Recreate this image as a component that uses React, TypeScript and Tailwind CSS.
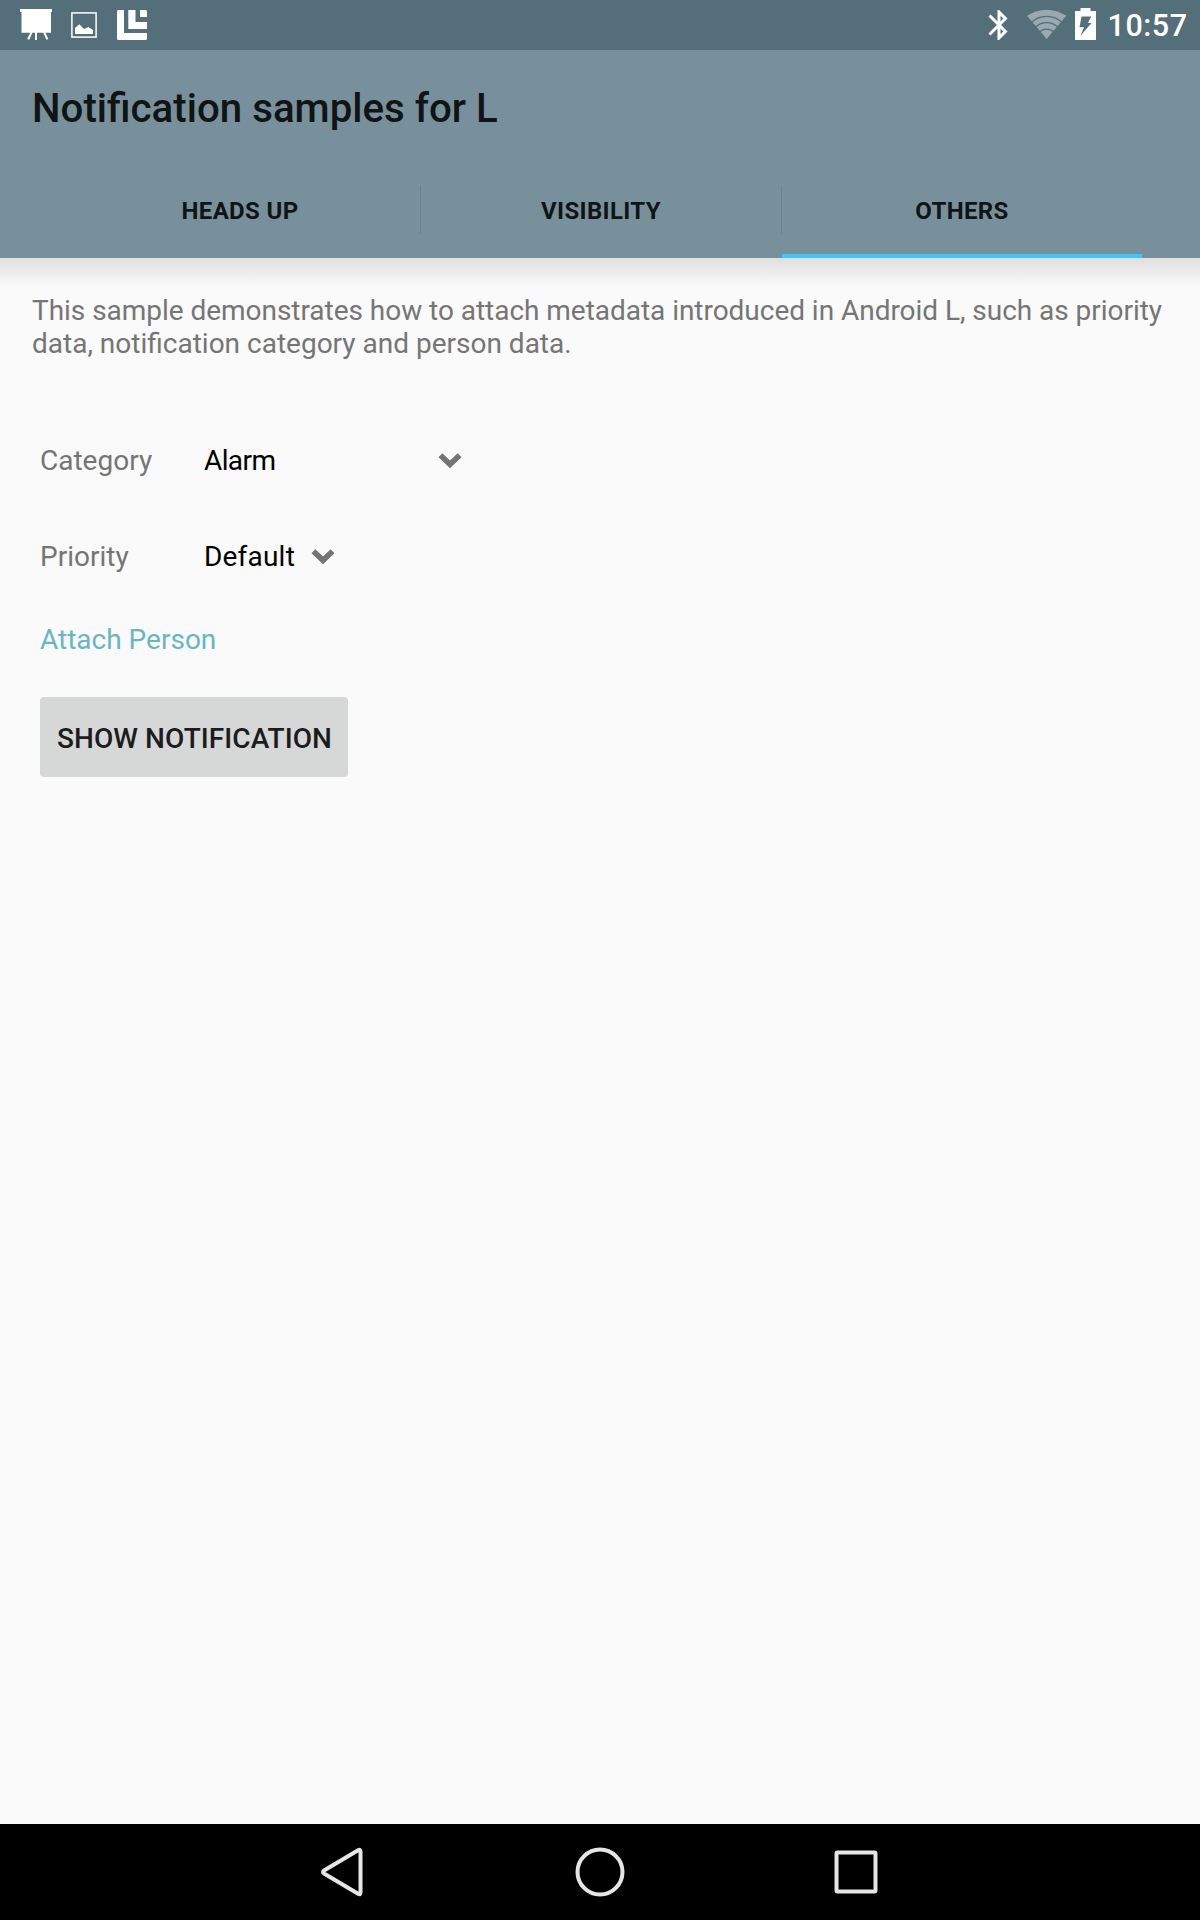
import type { ReactNode } from "react";

function StatusBar() {
  return (
    <div className="flex h-[50px] items-center justify-between bg-[#546e7a] text-white">
      <svg width="180" height="50" viewBox="0 0 180 50" fill="#fff">
        <path d="M20 9h32v3h-1v20.7h-5.6l3 6.3-2 .8-3.1-7.1h-6.3V40h-2v-7.300h-2.600l-3.200 7.100-2-.8 3-6.300h-8.700V12H20z" />
        <rect x="71.900" y="12.900" width="24.200" height="24.200" fill="none" stroke="#fff" strokeWidth="1.500" />
        <path d="M75 34v-6l4.300-3.700 4.700 4.600 4.500-2L93 30v4z" />
        <path d="M118.500 10H124v23h23v5.500q0 1.500-1.500 1.500h-27q-1.500 0-1.500-1.500v-27q0-1.500 1.500-1.500z" />
        <path d="M128.300 10h7.200v12H147v7h-18.700z" />
        <path d="M140 10h5.500q1.500 0 1.500 1.500V17h-7z" />
      </svg>
      <div className="flex items-center">
        <svg width="130" height="50" viewBox="970 0 130 50" fill="#fff">
          <path
            transform="translate(981 7) scale(1.5)"
            d="M17.710 7.710L12 2h-1v7.590L6.410 5 5 6.410 10.590 12 5 17.590 6.410 19 11 14.410V22h1l5.710-5.710-4.300-4.290 4.300-4.290zM13 5.830l1.880 1.880L13 9.590V5.830zm1.880 10.460L13 18.170v-3.760l1.880 1.880z"
          />
          <path d="M1027 15.800Q1046.700 3.800 1066.300 15.800L1046.700 39z" fill="#99a9b0" />
          <g fill="none" stroke="#546e7a" strokeWidth="1.300">
            <path d="M1031 22.700a22.700 22.700 0 0 1 31.400 0" />
            <path d="M1035 27.600a16.300 16.300 0 0 1 23.400 0" />
            <path d="M1039.500 32.100a10 10 0 0 1 14.400 0" />
          </g>
          <path
            fillRule="evenodd"
            d="M1080.500 8h10v3h5.500v29h-21V11h5.500zM1081.500 16.500h9.700l-3.200 6.500h3.500L1080.500 35.800l3.600-8.500h-4.600z"
          />
        </svg>
        <span className="relative top-px w-[100px] pl-[7.5px] text-[30.5px] leading-[50px] font-medium tracking-[0.55px] whitespace-nowrap">
          10:57
        </span>
      </div>
    </div>
  );
}

function Tab({ label, active = false }: { label: string; active?: boolean }) {
  return (
    <div
      className={`flex w-[360px] justify-center border-b-4 pt-1 text-[24px] font-bold ${
        active ? "border-[#40c4ff]" : "border-transparent"
      }`}
    >
      <span className="leading-[90px] tracking-[0.35px]">{label}</span>
    </div>
  );
}

function Divider() {
  return <div className="mt-6 h-12 w-px bg-[#6d828c]" />;
}

function Header() {
  return (
    <header className="h-[208px] bg-[#78909c] text-[#101415]">
      <h1 className="h-28 pl-8 text-[40.25px] leading-[118px] font-medium">Notification samples for L</h1>
      <nav className="flex h-24 pl-[60px]">
        <Tab label="HEADS UP" />
        <Divider />
        <Tab label="VISIBILITY" />
        <Divider />
        <Tab label="OTHERS" active />
      </nav>
    </header>
  );
}

function Chevron() {
  return (
    <svg className="mt-0.5" width="24" height="16" viewBox="0 0 24 16" fill="none" stroke="#757575" strokeWidth="5.600">
      <path d="M2.400 2.200L12 11.300l9.600-9.100" />
    </svg>
  );
}

function Field({ label, children }: { label: string; children: ReactNode }) {
  return (
    <div className="flex h-24 items-center">
      <span className="w-[164px] text-[#757575]">{label}</span>
      {children}
    </div>
  );
}

function NavBar() {
  return (
    <footer className="h-24 bg-black">
      <svg width="1200" height="96" viewBox="0 0 1200 96" fill="none" stroke="#e6e6e6" strokeWidth="4" strokeLinejoin="round">
        <path d="M324 46.500q-2 1.500 0 3L358.500 70q2 .8 2-1.500v-41q0-2.300-2-1.500z" />
        <circle cx="600" cy="48" r="22.500" />
        <rect x="836.500" y="28.500" width="39" height="39" rx="1" />
      </svg>
    </footer>
  );
}

export default function App() {
  return (
    <div className="flex h-[1920px] w-[1200px] flex-col bg-[#fafafa] font-['Roboto',sans-serif] text-[28px] leading-[33px]">
      <StatusBar />
      <Header />
      <div className="h-7 bg-linear-to-b from-[#dfdfdf] to-[#fafafa]" />
      <main className="flex-1 px-8">
        <p className="mt-2 text-[#757575]">
          <span className="tracking-[-0.035px]">
            This sample demonstrates how to attach metadata introduced in Android L, such as priority
          </span>
          <br />
          data, notification category and person data.
        </p>
        <div className="mt-[52px] pl-2">
          <Field label="Category">
            <span className="w-[234px] tracking-[-0.6px] text-black">Alarm</span>
            <Chevron />
          </Field>
          <Field label="Priority">
            <span className="w-[107px] tracking-[0.2px] text-black">Default</span>
            <Chevron />
          </Field>
          <div className="mt-[19px] text-[#6bb5c3]">Attach Person</div>
          <button className="mt-[41px] h-20 w-[308px] rounded-[4px] bg-[#d6d7d7] pt-0.5 pl-px font-medium tracking-[0.07px] text-[#1c1c1c]">
            SHOW NOTIFICATION
          </button>
        </div>
      </main>
      <NavBar />
    </div>
  );
}
